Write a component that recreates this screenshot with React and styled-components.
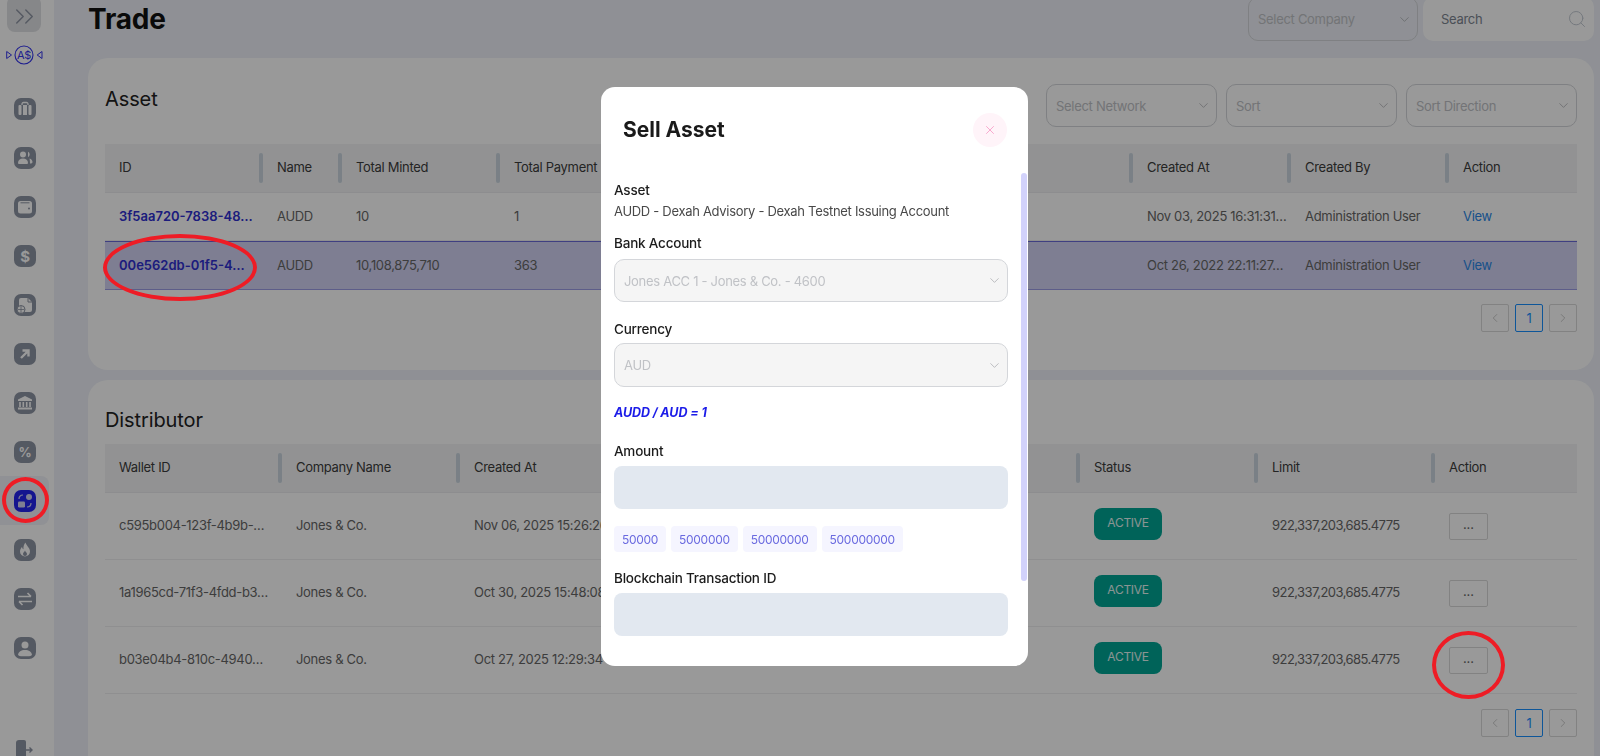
import styled, { createGlobalStyle } from "styled-components"
import { ChevronDown, ChevronLeft, ChevronRight, ChevronsRight, Search, X } from "lucide-react"

const GlobalStyle = createGlobalStyle`
  html, body {
    margin: 0;
    height: 100%;
    overflow: hidden;
  }
  body {
    font-family: Inter, "Liberation Sans", sans-serif;
    font-size: 13px;
    letter-spacing: -0.3px;
    color: #444;
    background: #eef1f8;
  }
  * {
    box-sizing: border-box;
  }
`

const Layout = styled.div`
  display: flex;
  height: 756px;
  overflow: hidden;
`

const Sidebar = styled.aside`
  width: 54px;
  flex: none;
  height: 756px;
  background: #fff;
  display: flex;
  flex-direction: column;
  overflow: hidden;
`

const Toggle = styled.button`
  width: 34px;
  height: 36px;
  margin: -4px 0 0 7px;
  padding: 4px 0 0;
  border: 0;
  border-radius: 8px;
  background: #e0e1e4;
  color: #8d94a3;
  display: flex;
  align-items: center;
  justify-content: center;
`

const LogoWrap = styled.div`
  height: 20px;
  margin: 13px 0 19px 6px;
  line-height: 0;
`

const NavItem = styled.div`
  width: 49px;
  height: 49px;
  display: flex;
  align-items: center;
  justify-content: center;
  border-radius: 0 8px 8px 0;
  background: ${(props) => (props.$active ? "#f1f2f8" : "transparent")};
`

const LogoutItem = styled.div`
  width: 49px;
  margin-top: auto;
  margin-bottom: -4px;
  display: flex;
  justify-content: center;
`

const Main = styled.main`
  flex: 1;
  min-width: 0;
  padding: 0 6px 0 34px;
  margin-top: -3px;
`

const TopBar = styled.header`
  height: 44px;
  margin-bottom: 17px;
  display: flex;
  align-items: center;
  gap: 5px;
`

const PageTitle = styled.h1`
  margin: 0 auto 0 0;
  font-size: 28px;
  line-height: 44px;
  font-weight: 700;
  letter-spacing: -0.2px;
  color: #111;
`

const Select = styled.div`
  width: ${(props) => props.$width || "171px"};
  height: ${(props) => props.$height || "43px"};
  flex: none;
  padding: 0 5px 0 9px;
  display: flex;
  align-items: center;
  justify-content: space-between;
  border: 1px solid #d4d6da;
  border-radius: 10px;
  background: ${(props) => (props.$disabled ? "#f5f5f5" : "transparent")};
  color: #c0c2c6;

  svg {
    color: #9a9ca0;
  }
`

const SearchBox = styled.div`
  width: 171px;
  height: 44px;
  flex: none;
  padding: 0 7px 0 18px;
  display: flex;
  align-items: center;
  justify-content: space-between;
  border-radius: 10px;
  background: #fff;
  color: #7d8591;
`

const Card = styled.section`
  height: ${(props) => props.$height};
  margin-bottom: 10px;
  padding: ${(props) => props.$pad} 17px 0;
  background: #fff;
  border-radius: 20px;
`

const CardHead = styled.div`
  display: flex;
  justify-content: space-between;
  align-items: flex-start;
  margin-bottom: ${(props) => props.$gap};
`

const CardTitle = styled.h2`
  margin: 1px 0 -1px;
  font-size: 20px;
  line-height: 28px;
  font-weight: 400;
  letter-spacing: -0.1px;
  color: #222;
`

const Filters = styled.div`
  display: flex;
  gap: 9px;
`

const HeadRow = styled.div`
  display: grid;
  grid-template-columns: ${(props) => props.$cols};
  height: 49px;
  padding-bottom: 2px;
  align-items: center;
  background: #f3f4f5;
  border-bottom: 1px solid #ebecee;
  color: #3c3c3c;
`

const HeadCell = styled.div`
  position: relative;
  height: 100%;
  padding-left: 14px;
  display: flex;
  align-items: center;
  white-space: nowrap;

  &:not(:last-child)::after {
    content: "";
    position: absolute;
    right: 0;
    top: 9px;
    width: 4px;
    height: 30px;
    border-radius: 2px;
    background: #cbd5e0;
  }
`

const Row = styled.div`
  display: grid;
  grid-template-columns: ${(props) => props.$cols};
  height: ${(props) => props.$height};
  align-items: center;
  padding-bottom: 2px;
  color: #666;
  background: ${(props) => (props.$selected ? "#d2d3f3" : "transparent")};
  border-top: ${(props) => (props.$selected ? "1px solid #6a6ad8" : "0")};
  border-bottom: 1px solid ${(props) => (props.$selected ? "#9c9ce4" : "#eeeff1")};
`

const Cell = styled.div`
  padding-left: 14px;
  white-space: nowrap;
  overflow: hidden;
`

const LimitText = styled.span`
  letter-spacing: -0.55px;
`

const IdLink = styled.a`
  color: #2f2fd0;
  font-weight: 600;
  letter-spacing: 0;
`

const ViewLink = styled.a`
  color: #2a86e6;
`

const Badge = styled.span`
  display: inline-flex;
  align-items: center;
  justify-content: center;
  width: 68px;
  height: 32px;
  margin-bottom: 3px;
  padding-bottom: 3px;
  border-radius: 8px;
  background: #00a594;
  color: #e6f7f5;
  font-size: 12px;
`

const DotsButton = styled.button`
  display: block;
  width: 39px;
  height: 27px;
  margin-top: 2px;
  padding: 0 0 4px;
  border: 1px solid #d9d9d9;
  border-radius: 2px;
  background: #fff;
  color: #666;
  font: 13px Inter, sans-serif;
`

const Pager = styled.div`
  margin-top: ${(props) => props.$top};
  display: flex;
  justify-content: flex-end;
  gap: 6px;
`

const PageButton = styled.div`
  width: 28px;
  height: 28px;
  display: flex;
  align-items: center;
  justify-content: center;
  border: 1px solid ${(props) => (props.$active ? "#1890ff" : "#d9d9d9")};
  border-radius: 2px;
  color: ${(props) => (props.$active ? "#1890ff" : "#b5b5b5")};
`

const Backdrop = styled.div`
  position: fixed;
  inset: 0;
  z-index: 10;
  padding: 0 0 3px 29px;
  background: rgba(0, 0, 0, 0.4);
  display: flex;
  align-items: center;
  justify-content: center;
`

const Modal = styled.div`
  position: relative;
  width: 427px;
  height: 579px;
  overflow: hidden;
  background: #fff;
  border-radius: 14px;
`

const ModalHead = styled.div`
  padding: 26px 21px 0 22px;
  display: flex;
  align-items: center;
  justify-content: space-between;
`

const ModalTitle = styled.h3`
  margin: -2px 0 0;
  font-size: 21px;
  font-weight: 700;
  letter-spacing: 0;
  color: #1a1a1a;
`

const CloseButton = styled.button`
  width: 34px;
  height: 34px;
  padding: 0;
  border: 0;
  border-radius: 50%;
  background: #fff4f9;
  color: #f58abb;
  display: flex;
  align-items: center;
  justify-content: center;
`

const ModalBody = styled.div`
  padding: 35px 20px 0 13px;
`

const Label = styled.div`
  margin: ${(props) => props.$top || "0"} 0 ${(props) => props.$bottom || "0"};
  font-size: 13.5px;
  line-height: 16px;
  font-weight: 500;
  letter-spacing: -0.2px;
  color: #1c1c1c;
`

const Value = styled.div`
  margin-top: 5px;
  line-height: 16px;
  color: #484848;
`

const Rate = styled.div`
  margin-top: 18px;
  line-height: 16px;
  font-size: 12.5px;
  font-weight: 700;
  font-style: italic;
  letter-spacing: -0.1px;
  color: #1c1ce8;
`

const Input = styled.div`
  height: 43px;
  border-radius: 8px;
  background: #e2e8f0;
`

const Chips = styled.div`
  margin-top: 17px;
  display: flex;
  gap: 5px;
`

const Chip = styled.span`
  height: 26px;
  padding: 0 8px;
  display: flex;
  align-items: center;
  border-radius: 4px;
  background: #f5f5ff;
  color: #6a6ae0;
  font-size: 12px;
  letter-spacing: -0.3px;
`

const ScrollThumb = styled.div`
  position: absolute;
  top: 86px;
  right: 1px;
  width: 6px;
  height: 408px;
  border-radius: 3px;
  background: #d2d2fb;
`

const Marker = styled.div`
  position: fixed;
  z-index: 20;
  left: ${(props) => props.$x}px;
  top: ${(props) => props.$y}px;
  width: ${(props) => props.$w}px;
  height: ${(props) => props.$h}px;
  border: 4px solid #ee1c25;
  border-radius: 50%;
  pointer-events: none;
`

const Squircle = ({ color = "#8d94a3", children }) => (
  <svg width="22" height="22" viewBox="0 0 22 22">
    <rect width="22" height="22" rx="7" fill={color} />
    {children}
  </svg>
)

const glyphText = {
  fill: "#fff",
  fontFamily: "Inter, sans-serif",
  fontWeight: 700,
  textAnchor: "middle",
}

const navIcons = [
  <Squircle key="case">
    <path d="M8 7V6a1.5 1.5 0 0 1 1.5-1.5h3A1.5 1.5 0 0 1 14 6v1" fill="none" stroke="#fff" strokeWidth="1.3" />
    <rect x="4.5" y="7" width="3" height="10" rx="1" fill="#fff" />
    <rect x="9" y="7" width="4" height="10" fill="#fff" />
    <rect x="14.5" y="7" width="3" height="10" rx="1" fill="#fff" />
  </Squircle>,
  <Squircle key="users">
    <circle cx="9" cy="7.5" r="3" fill="#fff" />
    <path d="M4 16c0-3 2-4.500 5-4.500s5 1.500 5 4.500c0 .8-.6 1-1.500 1h-7C4.600 17 4 16.800 4 16z" fill="#fff" />
    <path d="M14 4.800a3 3 0 0 1 0 5.400zM15.500 11.500c2 .5 3 2 3 3.500s-1 1.500-2.500 1.500c0-2-.2-3.500-.5-5z" fill="#fff" />
  </Squircle>,
  <Squircle key="wallet">
    <path d="M4 7.500a2.500 2.500 0 0 1 2.500-2.500h9a2.500 2.500 0 0 1 2.500 2.500V15a2.500 2.500 0 0 1-2.500 2.500h-9A2.500 2.500 0 0 1 4 15z" fill="#fff" />
    <path d="M6.500 6.800h9" stroke="#8d94a3" strokeWidth="1" />
    <circle cx="15" cy="12.500" r="1" fill="#8d94a3" />
  </Squircle>,
  <Squircle key="dollar">
    <text x="11" y="16.500" fontSize="15" style={glyphText}>$</text>
  </Squircle>,
  <Squircle key="doc">
    <path d="M5 6a2 2 0 0 1 2-2h7l4 4v8a2 2 0 0 1-2 2H7a2 2 0 0 1-2-2z" fill="#fff" />
    <path d="M14 4v4h4" fill="none" stroke="#8d94a3" strokeWidth="1" />
    <circle cx="7" cy="15.500" r="4" fill="#fff" stroke="#8d94a3" strokeWidth="1" />
    <path d="M3.500 15.500h7M7 12v7" stroke="#8d94a3" strokeWidth=".8" />
  </Squircle>,
  <Squircle key="arrow">
    <path d="M7 15l7-7M8.500 7.500H14.500V13.500" fill="none" stroke="#fff" strokeWidth="2.400" />
  </Squircle>,
  <Squircle key="bank">
    <path d="M11 4l7 3.500V9H4V7.500z" fill="#fff" />
    <path d="M6 10v5M9.300 10v5M12.700 10v5M16 10v5" stroke="#fff" strokeWidth="1.600" />
    <rect x="4" y="15.500" width="14" height="2" fill="#fff" />
  </Squircle>,
  <Squircle key="percent">
    <text x="11" y="16" fontSize="13" style={glyphText}>%</text>
  </Squircle>,
  <Squircle key="active" color="#2424ee">
    <circle cx="15" cy="7" r="3" fill="#d2d3f3" />
    <rect x="4" y="11.500" width="7" height="6" rx="1.200" fill="#d2d3f3" />
    <path d="M5 9c0-2.500 1.500-4 4-4M17 13c0 2.500-1.500 4-4 4" fill="none" stroke="#d2d3f3" strokeWidth="1.200" />
  </Squircle>,
  <Squircle key="flame">
    <path d="M11.500 3.500c.5 3 4.500 5 4.500 9a5 5 0 0 1-10 0c0-2 1-3.500 2-4.500.3 1.200.8 2 1.500 2.300-.3-2.500.3-5 2-6.800z" fill="#fff" />
    <path d="M11 11.500c.3 1.500 2 2 2 3.500a2 2 0 0 1-4 0c0-1.500 1.500-2 2-3.500z" fill="#8d94a3" />
  </Squircle>,
  <Squircle key="swap">
    <path d="M4 8.500h13M13.500 5l3.500 3.500M18 13.500H5M8.500 17L5 13.500" fill="none" stroke="#fff" strokeWidth="1.700" />
  </Squircle>,
  <Squircle key="user">
    <circle cx="11" cy="8" r="3.500" fill="#fff" />
    <path d="M4 18c.5-3.500 3-5 7-5s6.500 1.500 7 5c-1 .8-2 1.200-3 1.200H7c-1 0-2-.4-3-1.200z" fill="#fff" />
  </Squircle>,
]

const LogoMark = () => (
  <svg width="37" height="20" viewBox="0 0 37 20">
    <circle cx="18" cy="10" r="9" fill="none" stroke="#3434ee" strokeWidth="1.100" />
    <text x="18" y="14" fontSize="11" textAnchor="middle" fill="#3434ee" fontFamily="Inter, sans-serif">A$</text>
    <path d="M.700 6.500L5.500 10 .700 13.500zM36 6.500L31.200 10 36 13.500z" fill="none" stroke="#3434ee" strokeWidth="1" />
  </svg>
)

const LogoutIcon = () => (
  <svg width="17" height="20" viewBox="0 0 17 20">
    <path d="M0 3a3 3 0 0 1 3-3h5a2 2 0 0 1 2 2v16a2 2 0 0 1-2 2H3a3 3 0 0 1-3-3z" fill="#8d94a3" />
    <path d="M10 10h6M13.500 7.500L16 10l-2.500 2.500" fill="none" stroke="#8d94a3" strokeWidth="1.400" />
  </svg>
)

const assetCols = "158px 79px 158px 158px 158px 158px 159px 158px 158px 128px"
const distCols = "177px 178px 177px 221px 222px 178px 177px 142px"

const assetHeaders = ["ID", "Name", "Total Minted", "Total Payment", "", "", "", "Created At", "Created By", "Action"]
const distHeaders = ["Wallet ID", "Company Name", "Created At", "", "", "Status", "Limit", "Action"]

const assets = [
  { id: "3f5aa720-7838-48…", minted: "10", payments: "1", created: "Nov 03, 2025 16:31:31…", height: "48px" },
  { id: "00e562db-01f5-4…", minted: "10,108,875,710", payments: "363", created: "Oct 26, 2022 22:11:27…", height: "49px", selected: true },
]

const wallets = [
  { id: "c595b004-123f-4b9b-…", created: "Nov 06, 2025 15:26:26" },
  { id: "1a1965cd-71f3-4fdd-b3…", created: "Oct 30, 2025 15:48:08" },
  { id: "b03e04b4-810c-4940…", created: "Oct 27, 2025 12:29:34" },
]

const Pagination = ({ top }) => (
  <Pager $top={top}>
    <PageButton><ChevronLeft size={14} strokeWidth={1.2} /></PageButton>
    <PageButton $active>1</PageButton>
    <PageButton><ChevronRight size={14} strokeWidth={1.2} /></PageButton>
  </Pager>
)

const Dropdown = ({ label, ...rest }) => (
  <Select {...rest}>
    {label}
    <ChevronDown size={15} strokeWidth={1} />
  </Select>
)

export default function App() {
  return (
    <Layout>
      <GlobalStyle />
      <Sidebar>
        <Toggle><ChevronsRight size={31} strokeWidth={1.100} /></Toggle>
        <LogoWrap><LogoMark /></LogoWrap>
        {navIcons.map((icon, i) => (
          <NavItem key={i} $active={i === 8}>{icon}</NavItem>
        ))}
        <LogoutItem><LogoutIcon /></LogoutItem>
      </Sidebar>

      <Main>
        <TopBar>
          <PageTitle>Trade</PageTitle>
          <Dropdown label="Select Company" $width="170px" $height="44px" />
          <SearchBox>
            Search
            <Search size={20} strokeWidth={1.200} color="#c4cad3" />
          </SearchBox>
        </TopBar>

        <Card $height="312px" $pad="26px">
          <CardHead $gap="17px">
            <CardTitle>Asset</CardTitle>
            <Filters>
              <Dropdown label="Select Network" />
              <Dropdown label="Sort" />
              <Dropdown label="Sort Direction" />
            </Filters>
          </CardHead>
          <HeadRow $cols={assetCols}>
            {assetHeaders.map((h, i) => <HeadCell key={i}>{h}</HeadCell>)}
          </HeadRow>
          {assets.map((a) => (
            <Row key={a.id} $cols={assetCols} $height={a.height} $selected={a.selected}>
              <Cell><IdLink>{a.id}</IdLink></Cell>
              <Cell>AUDD</Cell>
              <Cell>{a.minted}</Cell>
              <Cell>{a.payments}</Cell>
              <Cell />
              <Cell />
              <Cell />
              <Cell>{a.created}</Cell>
              <Cell>Administration User</Cell>
              <Cell><ViewLink>View</ViewLink></Cell>
            </Row>
          ))}
          <Pagination top="14px" />
        </Card>

        <Card $height="400px" $pad="25px">
          <CardHead $gap="11px">
            <CardTitle>Distributor</CardTitle>
          </CardHead>
          <HeadRow $cols={distCols}>
            {distHeaders.map((h, i) => <HeadCell key={i}>{h}</HeadCell>)}
          </HeadRow>
          {wallets.map((w) => (
            <Row key={w.id} $cols={distCols} $height="67px">
              <Cell>{w.id}</Cell>
              <Cell>Jones &amp; Co.</Cell>
              <Cell>{w.created}</Cell>
              <Cell />
              <Cell />
              <Cell><Badge>ACTIVE</Badge></Cell>
              <Cell><LimitText>922,337,203,685.4775</LimitText></Cell>
              <Cell><DotsButton>...</DotsButton></Cell>
            </Row>
          ))}
          <Pagination top="15px" />
        </Card>
      </Main>

      <Backdrop>
        <Modal>
          <ModalHead>
            <ModalTitle>Sell Asset</ModalTitle>
            <CloseButton><X size={14} strokeWidth={1.200} /></CloseButton>
          </ModalHead>
          <ModalBody>
            <Label>Asset</Label>
            <Value>AUDD - Dexah Advisory - Dexah Testnet Issuing Account</Value>
            <Label $top="16px" $bottom="8px">Bank Account</Label>
            <Dropdown label="Jones ACC 1 - Jones & Co. - 4600" $width="100%" $disabled />
            <Label $top="19px" $bottom="6px">Currency</Label>
            <Dropdown label="AUD" $width="100%" $height="44px" $disabled />
            <Rate>AUDD / AUD = 1</Rate>
            <Label $top="22px" $bottom="7px">Amount</Label>
            <Input />
            <Chips>
              <Chip>50000</Chip>
              <Chip>5000000</Chip>
              <Chip>50000000</Chip>
              <Chip>500000000</Chip>
            </Chips>
            <Label $top="18px" $bottom="7px">Blockchain Transaction ID</Label>
            <Input />
          </ModalBody>
          <ScrollThumb />
        </Modal>
      </Backdrop>

      <Marker $x={2} $y={477} $w={47} $h={46} />
      <Marker $x={103} $y={234} $w={154} $h={67} />
      <Marker $x={1432} $y={631} $w={73} $h={68} />
    </Layout>
  )
}
